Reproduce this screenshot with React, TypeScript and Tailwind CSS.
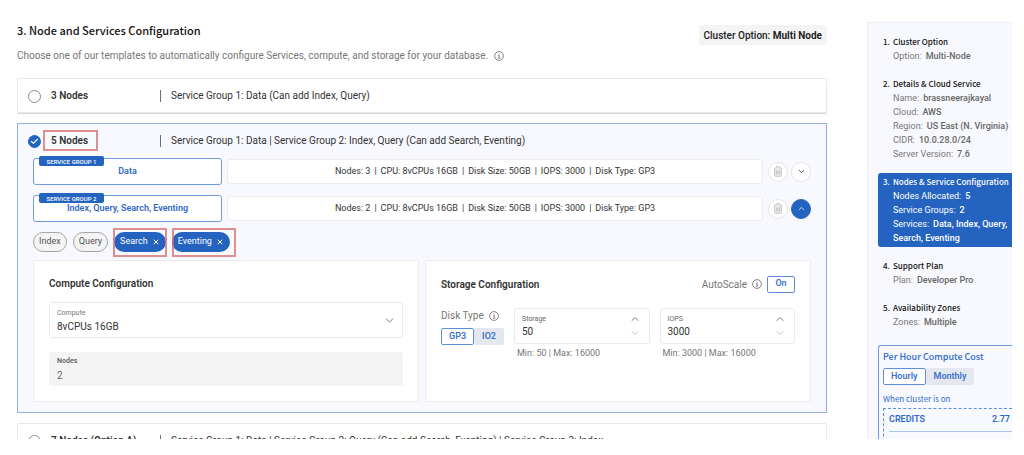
import { useState } from "react";
import type { ReactNode } from "react";
import { Check, ChevronDown, ChevronUp, X } from "lucide-react";
import clsx from "clsx";

const headingFont = "font-['Noto_Sans_CJK_SC',sans-serif]";

function InfoIcon() {
  return (
    <svg viewBox="0 0 20 20" className="size-[10px] shrink-0" fill="none" stroke="currentColor" strokeWidth="1.8">
      <circle cx="10" cy="10" r="8.8" />
      <path d="M8 9h2.4v5M7.6 14.2h5" />
      <circle cx="10" cy="5.8" r="1" fill="currentColor" stroke="none" />
    </svg>
  );
}

function TrashIcon() {
  return (
    <svg viewBox="0 0 20 22" className="h-[11px] w-[10px]" fill="none" stroke="#b9b9b9" strokeWidth="1.6">
      <path d="M1.5 4.5h17M6.5 4V1.5h7V4" />
      <path d="M3.2 4.5v14a2 2 0 0 0 2 2h9.600a2 2 0 0 0 2-2v-14" fill="#ececec" />
      <path d="M7 9v7.500M10 9v7.500M13 9v7.500" />
    </svg>
  );
}

interface OptionHeaderProps {
  id: string;
  label: string;
  description: string;
  selected: string;
  onSelect: (id: string) => void;
  marked?: boolean;
}

function OptionHeader({ id, label, description, selected, onSelect, marked }: OptionHeaderProps) {
  return (
    <label className="flex h-[33px] items-center px-[10px] text-[10px] text-[#333]">
      <span className="relative mt-0.5 flex size-[13px] shrink-0">
        <input
          type="radio"
          name="nodes"
          checked={selected === id}
          onChange={() => onSelect(id)}
          className="size-[13px] appearance-none rounded-full border border-[#8c8c8c] bg-white checked:border-[#2463bf] checked:bg-[#2463bf]"
        />
        {selected === id && (
          <Check size={9} strokeWidth={3} className="pointer-events-none absolute top-0.5 left-0.5 text-white" />
        )}
      </span>
      <span className="relative ml-[10px] w-[109px] shrink-0 font-semibold">
        {label}
        {marked && <span className="absolute -top-[3px] -left-2 h-[21px] w-[55px] border-2 border-[#d9696b]/75" />}
      </span>
      <span className="h-3 w-px shrink-0 bg-[#6f6f6f]" />
      <span className="ml-[10px] whitespace-nowrap">{description}</span>
    </label>
  );
}

interface GroupRowProps {
  tag: string;
  services: string;
  specs: string[];
  open?: boolean;
}

function GroupRow({ tag, services, specs, open }: GroupRowProps) {
  return (
    <div className="flex items-center">
      <div className="relative flex h-[27px] w-[189px] shrink-0 items-center justify-center rounded-[3px] border border-[#6f9be0] bg-white text-[9px] font-semibold text-[#2f69c6]">
        <span className="absolute -top-[3px] left-[5px] flex h-[10px] w-[65px] items-center justify-center rounded-[2px] bg-[#2463bf] text-[6px] font-medium text-white">
          {tag}
        </span>
        {services}
      </div>
      <div className="ml-[5px] flex h-[25px] flex-1 items-center justify-center gap-1 rounded-[3px] border border-[#ececec] bg-white text-[9px] text-[#333]">
        {specs.map((spec, i) => (
          <span key={spec} className="flex gap-1">
            {i > 0 && <span>|</span>}
            {spec}
          </span>
        ))}
      </div>
      <button
        type="button"
        aria-label="Delete group"
        className="ml-[5px] flex size-5 items-center justify-center rounded-full border border-[#e6e6e6] bg-white"
      >
        <TrashIcon />
      </button>
      <button
        type="button"
        aria-label="Toggle group"
        className={clsx(
          "ml-[3px] flex size-5 items-center justify-center rounded-full border",
          open ? "border-[#2463bf] bg-[#2463bf] text-white" : "border-[#e6e6e6] bg-white text-[#444]",
        )}
      >
        {open ? <ChevronUp size={9} strokeWidth={2} /> : <ChevronDown size={9} strokeWidth={2.5} />}
      </button>
    </div>
  );
}

function RemovableChip({ children, frame }: { children: ReactNode; frame: string }) {
  return (
    <div className="relative">
      <button
        type="button"
        className="flex h-5 items-center gap-1 rounded-full bg-[#2463bf] px-[6px] text-[9px] text-white"
      >
        {children}
        <X size={8} strokeWidth={3} />
      </button>
      <span
        className={clsx("pointer-events-none absolute -top-1 -bottom-[5px] border-2 border-[#d9696b]/75", frame)}
      />
    </div>
  );
}

function NumberField({ id, label, value, hint }: { id: string; label: string; value: string; hint: string }) {
  return (
    <div className="min-w-0 flex-1">
      <div className="flex h-9 items-center rounded-[3px] border border-[#e9e9e9] pr-2 pl-[7px]">
        <div className="min-w-0 flex-1">
          <label htmlFor={id} className="block text-[7px] leading-[10px] text-[#666]">
            {label}
          </label>
          <input
            id={id}
            defaultValue={value}
            className="block h-[14px] w-full bg-transparent text-[10px] text-[#333] outline-none"
          />
        </div>
        <div className="flex flex-col gap-0.5">
          <button type="button" aria-label={`Increase ${label}`} className="text-[#666]">
            <ChevronUp size={12} strokeWidth={1.8} />
          </button>
          <button type="button" aria-label={`Decrease ${label}`} className="text-[#bbb]">
            <ChevronDown size={12} strokeWidth={1.8} />
          </button>
        </div>
      </div>
      <p className="mt-[3px] pl-[3px] text-[9px] leading-3 whitespace-nowrap text-[#777]">{hint}</p>
    </div>
  );
}

function Toggle({ options, className }: { options: string[]; className: string }) {
  const [active, setActive] = useState(options[0]);
  return (
    <div className="flex">
      {options.map((option) => (
        <button
          key={option}
          type="button"
          onClick={() => setActive(option)}
          className={clsx(
            "rounded-[2px] border text-[9px] font-semibold text-[#3a72cc]",
            className,
            active === option ? "border-[#5f8fdc] bg-white" : "border-[#e5e7ee] bg-[#e5e7ee]",
          )}
        >
          {option}
        </button>
      ))}
    </div>
  );
}

interface Step {
  title: string;
  rows: [string, string][];
  current?: boolean;
}

const steps: Step[] = [
  { title: "Cluster Option", rows: [["Option:", "Multi-Node"]] },
  {
    title: "Details & Cloud Service",
    rows: [
      ["Name:", "brassneerajkayal"],
      ["Cloud:", "AWS"],
      ["Region:", "US East (N. Virginia)"],
      ["CIDR:", "10.0.28.0/24"],
      ["Server Version:", "7.6"],
    ],
  },
  {
    title: "Nodes & Service Configuration",
    current: true,
    rows: [
      ["Nodes Allocated:", "5"],
      ["Service Groups:", "2"],
      ["Services:", "Data, Index, Query, Search, Eventing"],
    ],
  },
  { title: "Support Plan", rows: [["Plan:", "Developer Pro"]] },
  { title: "Availability Zones", rows: [["Zones:", "Multiple"]] },
];

function Sidebar() {
  return (
    <aside className="mt-[22px] w-[145px] shrink-0 overflow-hidden border-t border-l border-[#ebedf2] bg-[#f8f9fe] pt-[10px] pl-[10px]">
      <ol className="flex flex-col gap-[10px]">
        {steps.map((step, i) => (
          <li
            key={step.title}
            className={clsx(
              "flex rounded-l-[3px] py-0.5 pl-[5px] text-[9px] leading-[14px]",
              step.current ? "bg-[#2463bf] text-white" : "text-[#777]",
            )}
          >
            <span
              className={clsx("w-[10px] shrink-0 text-[8px] font-medium", headingFont, !step.current && "text-[#111]")}
            >
              {i + 1}.
            </span>
            <div className="min-w-0">
              <h3
                className={clsx(
                  "text-[8px] leading-[14px] font-medium whitespace-nowrap",
                  headingFont,
                  !step.current && "text-[#111]",
                )}
              >
                {step.title}
              </h3>
              {step.rows.map(([name, value]) => (
                <p key={name}>
                  {name}
                  <span className={clsx("ml-1 font-medium", !step.current && "text-[#666]")}>{value}</span>
                </p>
              ))}
            </div>
          </li>
        ))}
      </ol>

      {/* Cost */}
      <div className="mt-[14px] h-[200px] rounded-tl-[3px] border-t border-l border-[#6f9be0] pt-1 pl-1 text-[#2f69c6]">
        <h3 className={clsx("text-[9px] leading-[14px] font-medium", headingFont)}>Per Hour Compute Cost</h3>
        <div className="mt-1">
          <Toggle options={["Hourly", "Monthly"]} className="h-[17px] px-[7px]" />
        </div>
        <p className={clsx("mt-2 text-[8px] leading-3", headingFont)}>When cluster is on</p>
        <div className="mt-[3px] h-[100px] border-t border-l border-dashed border-[#5f8fdc] pl-[5px] text-[9px]">
          <div className="flex h-[23px] items-center justify-between border-b border-[#a9c5ee] pr-0.5 font-semibold">
            <span>CREDITS</span>
            <span>2.77</span>
          </div>
        </div>
      </div>
    </aside>
  );
}

export default function App() {
  const [selected, setSelected] = useState("5");

  return (
    <div className="h-screen overflow-hidden bg-white pr-3 pb-4 pl-[17px] font-[Roboto,sans-serif]">
      <div className="flex h-full gap-10 overflow-hidden">
        <main className="min-w-0 flex-1 pt-[22px]">
          <header className="flex justify-between">
            <div>
              <h1 className={clsx("text-[11px] leading-4 font-medium text-[#111]", headingFont)}>
                3. Node and Services Configuration
              </h1>
              <p className="mt-[10px] flex items-center gap-[6px] text-[10px] leading-4 text-[#777]">
                Choose one of our templates to automatically configure Services, compute, and storage for your database.
                <InfoIcon />
              </p>
            </div>
            <div className="mt-[3px] flex h-5 items-center rounded-[2px] bg-[#f4f4f4] px-[5px] text-[10px] text-[#222]">
              <span className="font-medium">
                Cluster Option: <b>Multi Node</b>
              </span>
            </div>
          </header>

          <div className="mt-[14px] flex flex-col gap-[10px]">
            <section className="rounded-[2px] border border-[#e8e8e8] shadow-[0_1px_1px_#d4d4d4]">
              <OptionHeader
                id="3"
                label="3 Nodes"
                description="Service Group 1: Data (Can add Index, Query)"
                selected={selected}
                onSelect={setSelected}
              />
            </section>

            <section className="border border-[#8fb1e5] bg-[#f8f9fe] pb-[10px]">
              <OptionHeader
                id="5"
                label="5 Nodes"
                description="Service Group 1: Data | Service Group 2: Index, Query (Can add Search, Eventing)"
                selected={selected}
                onSelect={setSelected}
                marked
              />
              <div className="px-[15px] pt-px">
                <div className="flex flex-col gap-[10px]">
                  <GroupRow
                    tag="SERVICE GROUP 1"
                    services="Data"
                    specs={["Nodes: 3", "CPU: 8vCPUs 16GB", "Disk Size: 50GB", "IOPS: 3000", "Disk Type: GP3"]}
                  />
                  <GroupRow
                    tag="SERVICE GROUP 2"
                    services="Index, Query, Search, Eventing"
                    specs={["Nodes: 2", "CPU: 8vCPUs 16GB", "Disk Size: 50GB", "IOPS: 3000", "Disk Type: GP3"]}
                    open
                  />
                </div>

                {/* Services in the open group */}
                <div className="mt-[10px] flex gap-[6px] text-[9px] text-[#555]">
                  <span className="flex h-5 items-center rounded-full border border-[#a5a5a5] bg-[#f4f4f4] px-[5px]">
                    Index
                  </span>
                  <span className="flex h-5 items-center rounded-full border border-[#a5a5a5] bg-[#f4f4f4] px-[5px]">
                    Query
                  </span>
                  <RemovableChip frame="-inset-x-px">Search</RemovableChip>
                  <RemovableChip frame="left-0 -right-[6px]">Eventing</RemovableChip>
                </div>

                <div className="mt-2 grid grid-cols-2 gap-[6px]">
                  <div className="rounded-[2px] border border-[#ececec] bg-white p-[15px]">
                    <h2 className="text-[10px] leading-4 font-semibold text-[#333]">Compute Configuration</h2>
                    <div className="relative mt-[10px] h-9 rounded-[3px] border border-[#e9e9e9] px-[7px] pt-[5px]">
                      <label htmlFor="compute" className="block text-[7px] leading-[10px] text-[#777]">
                        Compute
                      </label>
                      <select
                        id="compute"
                        className="mt-0.5 block h-[14px] w-full appearance-none bg-transparent text-[10px] leading-[14px] text-[#333] outline-none"
                      >
                        <option>8vCPUs 16GB</option>
                      </select>
                      <ChevronDown
                        size={13}
                        strokeWidth={1.8}
                        className="pointer-events-none absolute top-[11px] right-[6px] text-[#777]"
                      />
                    </div>
                    <div className="mt-[14px] h-[34px] rounded-[3px] bg-[#f4f4f4] px-2 pt-1">
                      <label htmlFor="nodes" className="block text-[7px] leading-[10px] font-medium text-[#555]">
                        Nodes
                      </label>
                      <input
                        id="nodes"
                        readOnly
                        value="2"
                        className="mt-0.5 block h-[14px] w-full bg-transparent text-[10px] text-[#666] outline-none"
                      />
                    </div>
                  </div>

                  <div className="rounded-[2px] border border-[#ececec] bg-white p-[15px]">
                    <div className="flex h-4 items-center justify-between">
                      <h2 className="text-[10px] font-semibold text-[#333]">Storage Configuration</h2>
                      <div className="flex items-center gap-[5px] text-[10px] text-[#777]">
                        AutoScale
                        <InfoIcon />
                        <button
                          type="button"
                          className="h-[17px] w-7 rounded-[2px] border border-[#5f8fdc] text-[9px] font-semibold text-[#3a72cc]"
                        >
                          On
                        </button>
                      </div>
                    </div>
                    <div className="mt-4 flex gap-[10px]">
                      <div className="w-[63px] shrink-0">
                        <p className="flex items-center gap-[5px] text-[10px] leading-4 whitespace-nowrap text-[#777]">
                          Disk Type
                          <InfoIcon />
                        </p>
                        <div className="mt-1">
                          <Toggle options={["GP3", "IO2"]} className="h-[17px] px-[7px]" />
                        </div>
                      </div>
                      <NumberField id="storage" label="Storage" value="50" hint="Min: 50 | Max: 16000" />
                      <NumberField id="iops" label="IOPS" value="3000" hint="Min: 3000 | Max: 16000" />
                    </div>
                  </div>
                </div>
              </div>
            </section>

            <section className="rounded-[2px] border border-[#e8e8e8]">
              <OptionHeader
                id="7a"
                label="7 Nodes (Option A)"
                description="Service Group 1: Data | Service Group 2: Query (Can add Search, Eventing) | Service Group 3: Index"
                selected={selected}
                onSelect={setSelected}
              />
            </section>
          </div>
        </main>

        <Sidebar />
      </div>
    </div>
  );
}
